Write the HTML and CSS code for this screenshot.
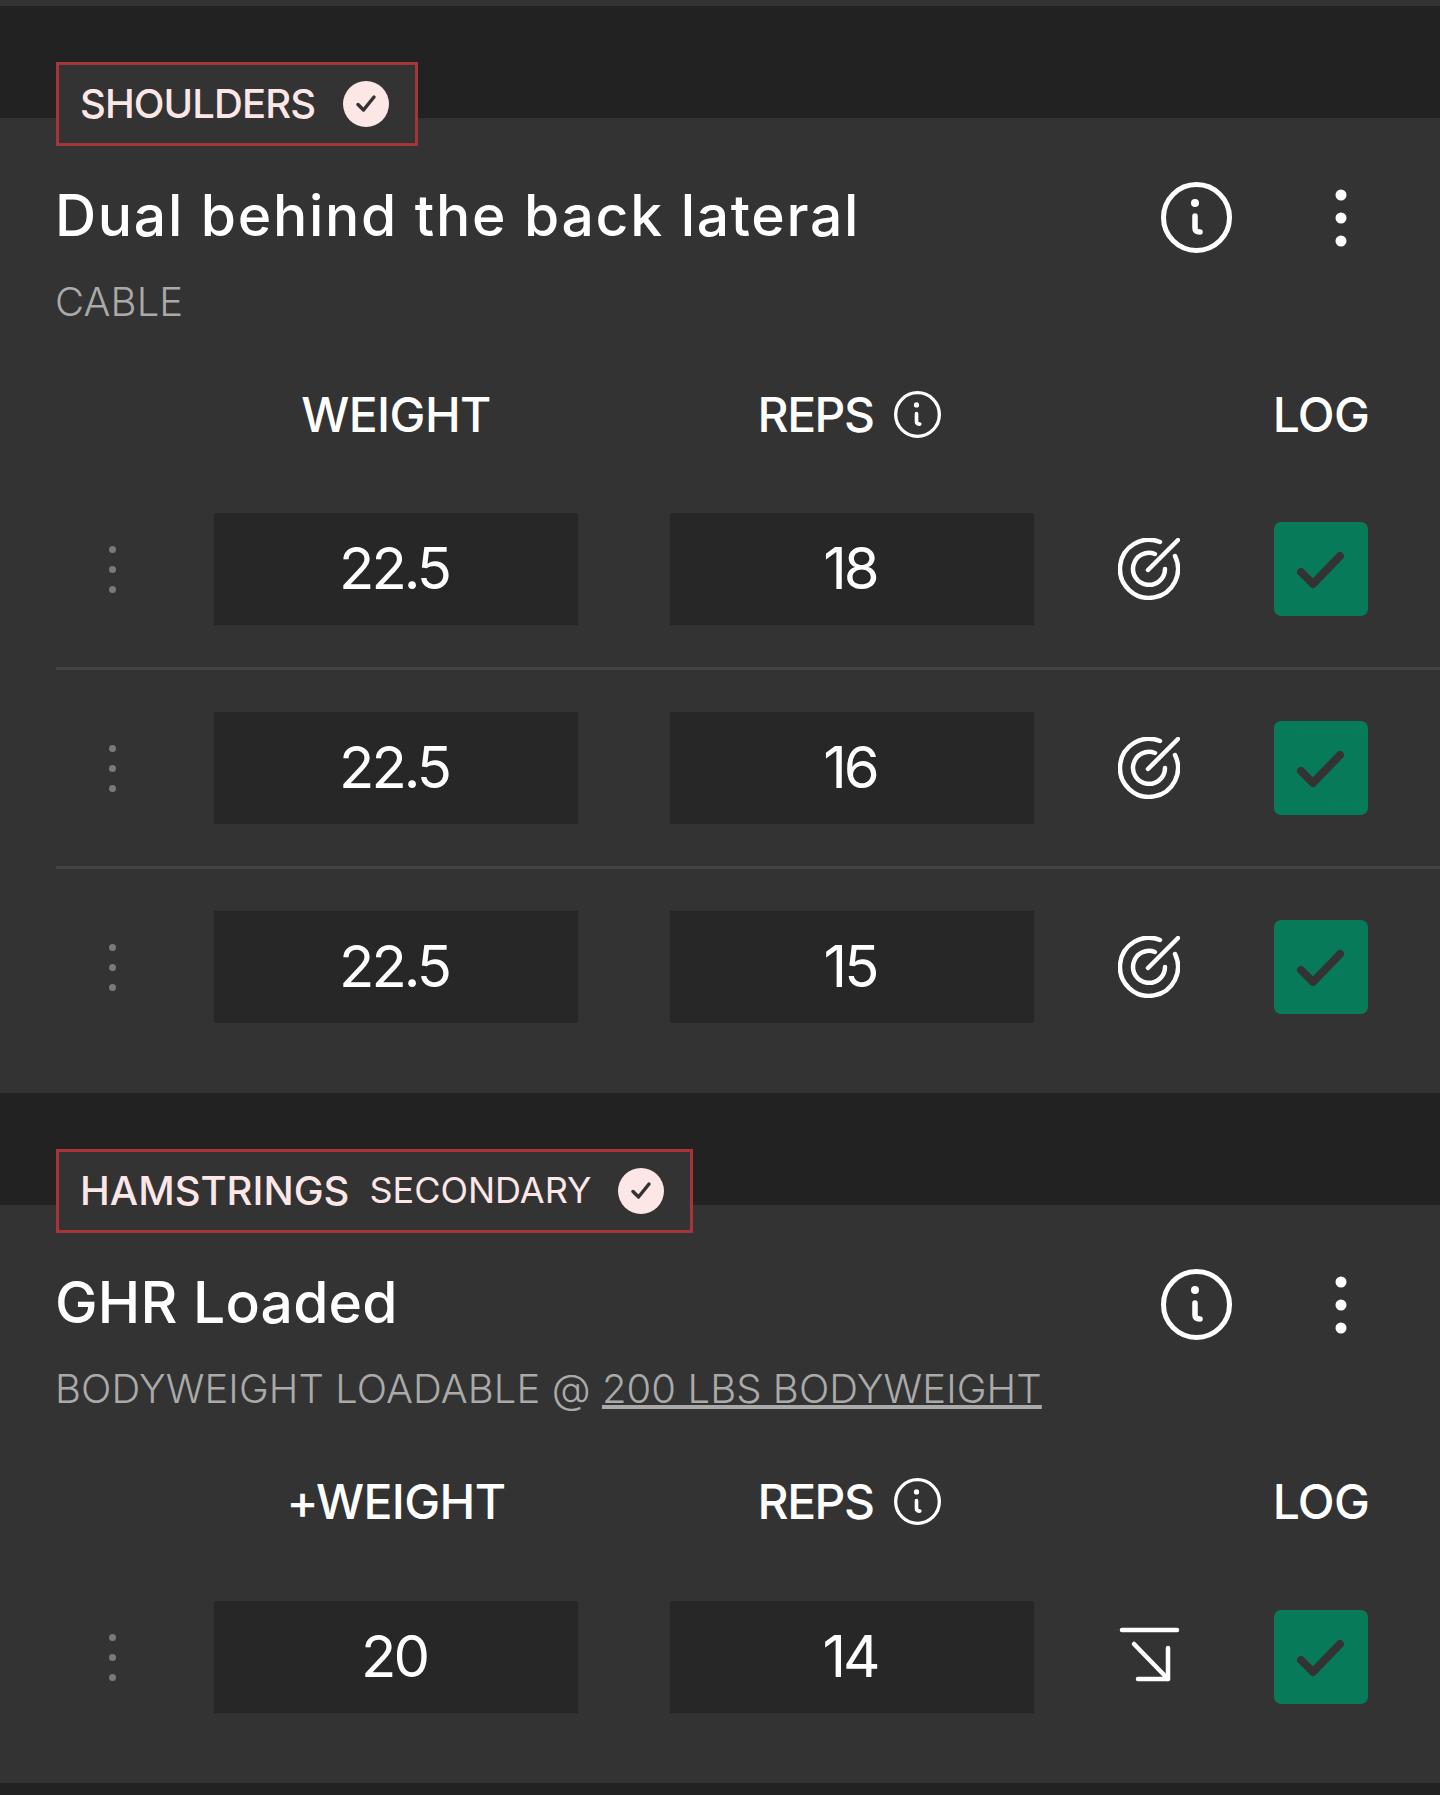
FILE: index.html
```html
<!DOCTYPE html>
<html lang="en">
<head>
    <meta charset="UTF-8">
    <title>Workout log</title>
    <link rel="stylesheet" href="styles.css">
</head>
<body>
    <svg class="defs" width="0" height="0">
        <symbol id="i-info" viewBox="0 0 71 71">
            <circle cx="35.5" cy="35.5" r="33" fill="none" stroke="currentColor" stroke-width="5"/>
            <circle cx="34" cy="21" r="4" fill="currentColor"/>
            <path d="M34 34V46Q34 50 39 50" fill="none" stroke="currentColor" stroke-width="5.5" stroke-linecap="round"/>
        </symbol>
        <symbol id="i-more" viewBox="0 0 12 58">
            <circle cx="6" cy="6" r="5.5" fill="currentColor"/>
            <circle cx="6" cy="29" r="5.5" fill="currentColor"/>
            <circle cx="6" cy="52" r="5.5" fill="currentColor"/>
        </symbol>
        <symbol id="i-target" viewBox="0 0 62 62">
            <g fill="none" stroke="currentColor" stroke-width="4.5" stroke-linecap="round">
                <path d="M42 4A29 29 0 1 0 57 18"/>
                <path d="M37 16A16 16 0 1 0 47 31"/>
                <path d="M30 32L60 2"/>
            </g>
        </symbol>
        <symbol id="i-arrow" viewBox="0 0 62 62">
            <g fill="none" stroke="currentColor" stroke-width="4.5" stroke-linecap="round" stroke-linejoin="round">
                <path d="M4 4H59"/>
                <path d="M16 18L50 53"/>
                <path d="M50 22V53H20"/>
            </g>
        </symbol>
        <symbol id="i-check" viewBox="0 0 94 94">
            <path d="M27 50L39 62L66 34" fill="none" stroke="currentColor" stroke-width="8" stroke-linecap="round" stroke-linejoin="round"/>
        </symbol>
        <symbol id="i-tick" viewBox="0 0 46 46">
            <path d="M15 23.5L20.5 29L31 16" fill="none" stroke="currentColor" stroke-width="3.5" stroke-linecap="round" stroke-linejoin="round"/>
        </symbol>
    </svg>

    <section class="card">
        <div class="badge">
            <span class="muscle muscle-tight">SHOULDERS</span>
            <span class="tick"><svg><use href="#i-tick"/></svg></span>
        </div>
        <div class="title-row">
            <h2>Dual behind the back lateral</h2>
            <svg class="icon-info"><use href="#i-info"/></svg>
            <svg class="icon-more"><use href="#i-more"/></svg>
        </div>
        <p class="sub">CABLE</p>
        <div class="row head">
            <div class="drag"></div>
            <div class="cell">WEIGHT</div>
            <div class="cell cell-reps"><span>REPS</span> <svg class="icon-info-small"><use href="#i-info"/></svg></div>
            <div class="goal"></div>
            <div class="log-title">LOG</div>
        </div>
        <div class="row set">
            <div class="drag"><i></i><i></i><i></i></div>
            <div class="cell value">22.5</div>
            <div class="cell value">18</div>
            <div class="goal"><svg class="icon-goal"><use href="#i-target"/></svg></div>
            <div class="log"><svg><use href="#i-check"/></svg></div>
        </div>
        <div class="row set">
            <div class="drag"><i></i><i></i><i></i></div>
            <div class="cell value">22.5</div>
            <div class="cell value">16</div>
            <div class="goal"><svg class="icon-goal"><use href="#i-target"/></svg></div>
            <div class="log"><svg><use href="#i-check"/></svg></div>
        </div>
        <div class="row set">
            <div class="drag"><i></i><i></i><i></i></div>
            <div class="cell value">22.5</div>
            <div class="cell value">15</div>
            <div class="goal"><svg class="icon-goal"><use href="#i-target"/></svg></div>
            <div class="log"><svg><use href="#i-check"/></svg></div>
        </div>
    </section>

    <section class="card">
        <div class="badge">
            <span class="muscle">HAMSTRINGS</span>
            <span class="role">SECONDARY</span>
            <span class="tick"><svg><use href="#i-tick"/></svg></span>
        </div>
        <div class="title-row">
            <h2 class="title-short">GHR Loaded</h2>
            <svg class="icon-info"><use href="#i-info"/></svg>
            <svg class="icon-more"><use href="#i-more"/></svg>
        </div>
        <p class="sub">BODYWEIGHT LOADABLE @ <u>200 LBS BODYWEIGHT</u></p>
        <div class="row head">
            <div class="drag"></div>
            <div class="cell">+WEIGHT</div>
            <div class="cell cell-reps"><span>REPS</span> <svg class="icon-info-small"><use href="#i-info"/></svg></div>
            <div class="goal"></div>
            <div class="log-title">LOG</div>
        </div>
        <div class="row set">
            <div class="drag"><i></i><i></i><i></i></div>
            <div class="cell value">20</div>
            <div class="cell value">14</div>
            <div class="goal"><svg class="icon-goal"><use href="#i-arrow"/></svg></div>
            <div class="log"><svg><use href="#i-check"/></svg></div>
        </div>
    </section>
</body>
</html>
```

FILE: styles.css
```css
* {
    box-sizing: border-box;
}
body {
    margin: 0;
    padding-bottom: 12px;
    font-family: Inter, "Liberation Sans", sans-serif;
    color: white;
    background-color: #222222;
    border-top: 6px solid #333333;
}
.defs {
    display: block;
    height: 0;
}
.card {
    margin-top: 112px;
    padding: 0 0 28px 56px;
    background-color: #333333;
}
.card:last-child .head {
    margin-bottom: 28px;
}
.badge {
    display: inline-flex;
    align-items: center;
    height: 84px;
    margin-top: -56px;
    padding: 0 26px 2px 21px;
    border: 3px solid #a83338;
    background-color: #333333;
    color: #fde6e6;
    vertical-align: top;
}
.muscle {
    font-size: 40px;
    font-weight: 500;
}
.muscle-tight {
    letter-spacing: -0.9px;
}
.role {
    margin-left: 20px;
    font-size: 36px;
}
.tick {
    width: 46px;
    height: 46px;
    margin: 2px 0 0 27px;
    border-radius: 50%;
    background-color: #fde6e6;
    color: #333333;
}
.muscle-tight + .tick {
    margin-left: 28px;
}
.tick svg {
    display: block;
    width: 46px;
    height: 46px;
}
.title-row {
    display: flex;
    align-items: center;
    height: 71px;
    margin-top: 36px;
}
h2 {
    flex: 1;
    margin: -4px 0 0 -1px;
    font-size: 57px;
    font-weight: 500;
    letter-spacing: 1.7px;
}
.title-short {
    letter-spacing: 0.2px;
}
.icon-info {
    width: 71px;
    height: 71px;
}
.icon-more {
    width: 12px;
    height: 58px;
    margin: 0 93px 0 103px;
}
.sub {
    margin: 19px 0 0 -1px;
    font-size: 40px;
    line-height: 60px;
    font-weight: 300;
    letter-spacing: 0.08px;
    color: #aaaaaa;
}
.row {
    display: flex;
    align-items: center;
    padding-right: 72px;
}
.head {
    height: 60px;
    margin-top: 52px;
    margin-bottom: 27px;
    font-size: 48px;
    font-weight: 500;
    letter-spacing: -0.6px;
}
.set {
    padding-top: 42px;
    padding-bottom: 42px;
    border-bottom: 3px solid #444444;
}
.set:last-child {
    border-bottom: none;
}
.drag {
    display: flex;
    flex-direction: column;
    align-items: center;
    gap: 13px;
    width: 112px;
    margin-right: 46px;
}
.drag i {
    width: 7px;
    height: 7px;
    border-radius: 50%;
    background-color: #7a7a7a;
}
.cell {
    display: flex;
    align-items: center;
    justify-content: center;
    gap: 21px;
    width: 364px;
}
.cell + .cell {
    margin-left: 92px;
}
.cell-reps {
    padding-right: 5px;
    letter-spacing: -1.5px;
}
.value {
    height: 112px;
    padding: 0 4px 2px 0;
    background-color: #272727;
    font-size: 58px;
    font-weight: 400;
    letter-spacing: -3px;
}
.icon-info-small {
    width: 47px;
    height: 47px;
}
.goal {
    display: flex;
    justify-content: center;
    width: 230px;
    margin-right: 10px;
}
.icon-goal {
    width: 62px;
    height: 62px;
}
.log-title {
    display: flex;
    justify-content: center;
    width: 94px;
}
.log {
    width: 94px;
    height: 94px;
    border-radius: 7px;
    background-color: #077a5a;
    color: #333333;
}
.log svg {
    display: block;
    width: 94px;
    height: 94px;
}
```
